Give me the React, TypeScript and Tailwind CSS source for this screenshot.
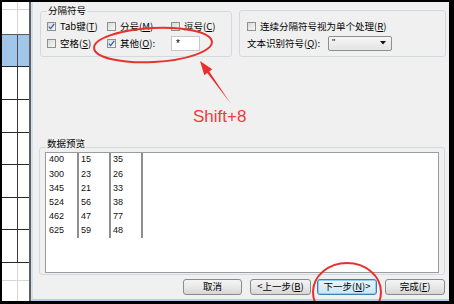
import React from "react";

const CJK = "font-['Noto_Sans_CJK_SC',sans-serif]";

function U({ c }: { c: string }) {
  return (
    <span>
      (<span className="underline underline-offset-1">{c}</span>)
    </span>
  );
}

function Cb({ checked }: { checked?: boolean }) {
  return (
    <span className="w-[9px] h-[9px] shrink-0 border border-[#8e8f8f] bg-gradient-to-br from-[#d9d9d9] to-[#f7f7f7] flex items-center justify-center">
      {checked && (
        <svg width="7" height="7" viewBox="0 0 7 7">
          <path d="M0.8 3.6 L2.7 5.6 L6.2 0.9" stroke="#3a5ba6" strokeWidth="1.3" fill="none" />
        </svg>
      )}
    </span>
  );
}

function Btn({ children, w, focus, ml }: { children: React.ReactNode; w: string; focus?: boolean; ml?: string }) {
  return (
    <div
      className={
        "h-[16px] rounded-[3px] border flex items-center justify-center text-[9.5px] leading-none text-black " +
        w +
        " " +
        (ml ?? "") +
        " " +
        (focus
          ? "border-[#3c7fb1] bg-gradient-to-b from-[#ecf7fd] to-[#c6e6f8] shadow-[inset_0_0_0_1px_#8fd0f3]"
          : "border-[#8a8a8a] bg-gradient-to-b from-[#f4f4f4] via-[#e9e9e9] to-[#d6d6d6]")
      }
    >
      {children}
    </div>
  );
}

function Sheet() {
  const rows: { h: string; b: string; v: string; bg?: string }[] = [
    { h: "h-[8px]", b: "border-[#d6d6d6]", v: "border-[#d6d6d6]" },
    { h: "h-[25px]", b: "border-[#5a5a5a]", v: "border-[#d6d6d6]" },
    { h: "h-[32px]", b: "border-[#2a2a2a]", v: "border-[#4a4a4a]", bg: "bg-[#a2c5ea]" },
    { h: "h-[33px]", b: "border-[#2a2a2a]", v: "border-[#3a3a3a]" },
    { h: "h-[33px]", b: "border-[#2a2a2a]", v: "border-[#3a3a3a]" },
    { h: "h-[32px]", b: "border-[#2a2a2a]", v: "border-[#3a3a3a]" },
    { h: "h-[33px]", b: "border-[#2a2a2a]", v: "border-[#3a3a3a]" },
    { h: "h-[32px]", b: "border-[#2a2a2a]", v: "border-[#3a3a3a]" },
    { h: "h-[33px]", b: "border-[#2a2a2a]", v: "border-[#3a3a3a]" },
    { h: "h-[18px]", b: "border-[#d6d6d6]", v: "border-[#d6d6d6]" },
  ];
  return (
    <div className="w-[29px] shrink-0 border-r-2 border-[#5f5f5f] bg-white flex flex-col">
      {rows.map((r, i) => (
        <div key={i} className={"flex border-b " + r.h + " " + r.b + " " + (r.bg ?? "")}>
          <div className={"w-[16px] border-r " + r.v} />
          <div className="flex-1" />
        </div>
      ))}
      <div className="flex flex-1">
        <div className="w-[16px] border-r border-[#d6d6d6]" />
        <div className="flex-1" />
      </div>
    </div>
  );
}

const data = [
  ["400", "15", "35"],
  ["300", "23", "26"],
  ["345", "21", "33"],
  ["524", "56", "38"],
  ["462", "47", "77"],
  ["625", "59", "48"],
];

function Dialog() {
  return (
    <div className={"flex-1 bg-[#f0f0f0] border-l-2 border-l-[#d4e0ec] border-b-2 border-b-[#b6cfe8] flex flex-col text-black " + CJK}>
      {/* top row */}
      <div className="flex items-start pl-[7px] gap-[7px]">
        <fieldset className="mt-[3px] w-[192px] h-[52px] border border-[#d3d9de] rounded-[3px]">
          <legend className="ml-[6px] px-[1px] text-[9.5px] leading-[11px] pb-[2px]">分隔符号</legend>
          <div className="pl-[6px] flex flex-col text-[9.5px]">
            <div className="h-[16px] flex items-center">
              <div className="w-[60px] flex items-center gap-[4px]">
                <Cb checked />
                <span>Tab键<U c="T" /></span>
              </div>
              <div className="w-[64px] flex items-center gap-[4px]">
                <Cb />
                <span>分号<U c="M" /></span>
              </div>
              <div className="flex items-center gap-[4px]">
                <Cb />
                <span>逗号<U c="C" /></span>
              </div>
            </div>
            <div className="h-[16px] mt-[1px] flex items-center">
              <div className="w-[60px] flex items-center gap-[4px]">
                <Cb />
                <span>空格<U c="S" /></span>
              </div>
              <div className="flex items-center gap-[4px]">
                <Cb checked />
                <span className="w-[47px]">其他<U c="O" />:</span>
                <div className="w-[29px] h-[15px] bg-white border border-[#c5c8cc] flex items-center pl-[4px] text-[10px] font-['Liberation_Sans',sans-serif]">
                  *
                </div>
              </div>
            </div>
          </div>
        </fieldset>
        <div className="mt-[8px] w-[207px] h-[47px] border border-[#d3d9de] rounded-[3px] pl-[7px] pt-[7px] flex flex-col text-[9.5px]">
          <div className="h-[16px] flex items-center gap-[4px]">
            <Cb />
            <span>连续分隔符号视为单个处理<U c="R" /></span>
          </div>
          <div className="h-[16px] mt-[1px] flex items-center">
            <span className="w-[81px]">文本识别符号<U c="Q" />:</span>
            <div className="w-[64px] h-[15px] rounded-[2px] border border-[#8e8f8f] bg-gradient-to-b from-[#f6f6f6] to-[#e4e4e4] flex items-start justify-between pl-[3px] pr-[5px]">
              <span className="text-[9px] leading-[10px] font-['Liberation_Sans',sans-serif]">"</span>
              <svg width="6" height="4" viewBox="0 0 6 4" className="self-center">
                <polygon points="0,0 6,0 3,3.5" fill="#111" />
              </svg>
            </div>
          </div>
        </div>
      </div>

      {/* data preview */}
      <fieldset className="mt-[81px] ml-[6px] w-[406px] h-[137px] border border-[#d3d9de] rounded-[3px]">
        <legend className="ml-[6px] px-[1px] text-[9.5px] leading-[11px] pb-[7px]">数据预览</legend>
        <div className="-mt-[4px] mx-[5px] h-[121px] bg-white border border-[#9c9c9c] flex items-start">
          {[0, 1, 2].map((c) => (
            <div
              key={c}
              className={
                "flex flex-col border-r-2 border-[#8f8f8f] h-[85px] " +
                (c === 0 ? "w-[33px] pl-[3px]" : "w-[32px] pl-[2px]")
              }
            >
              {data.map((r, i) => (
                <div key={i} className="h-[14.2px] flex items-center text-[9px] font-['Liberation_Sans',sans-serif] text-[#111]">
                  {r[c]}
                </div>
              ))}
            </div>
          ))}
        </div>
      </fieldset>

      {/* buttons */}
      <div className="mt-[4px] flex justify-end pr-[4px]">
        <Btn w="w-[59px]">取消</Btn>
        <Btn w="w-[61px]" ml="ml-[8px]">
          &lt;上一步<U c="B" />
        </Btn>
        <Btn w="w-[60px]" ml="ml-[6px]" focus>
          下一步<U c="N" />&gt;
        </Btn>
        <Btn w="w-[60px]" ml="ml-[8px]">
          完成<U c="F" />
        </Btn>
      </div>
    </div>
  );
}

function Overlay() {
  return (
    <>
      <svg className="absolute inset-0 pointer-events-none" width="454" height="304" viewBox="0 0 454 304">
        <defs>
          <clipPath id="dlg">
            <rect x="31" y="2" width="418" height="299" />
          </clipPath>
        </defs>
        <g clipPath="url(#dlg)" fill="none" stroke="#e8312e" strokeWidth="2">
          <ellipse cx="153" cy="45" rx="59" ry="17" transform="rotate(-3 153 45)" />
          <ellipse cx="347" cy="292" rx="34" ry="29" />
        </g>
        <polygon
          points="200,61 204.3,75.3 207.3,73.1 231,104 209.3,71.6 212.3,69.3"
          fill="#e8312e"
        />
      </svg>
      <div className="absolute left-[193px] top-[108px] text-[17px] leading-[17px] text-[#f03a3a] font-['Liberation_Sans',sans-serif] pointer-events-none">
        Shift+8
      </div>
    </>
  );
}

export default function App() {
  return (
    <div className="relative w-[454px] h-[304px] bg-black pl-[2px] pt-[2px] pr-[5px] pb-[3px] flex overflow-hidden">
      <Sheet />
      <Dialog />
      <Overlay />
    </div>
  );
}
